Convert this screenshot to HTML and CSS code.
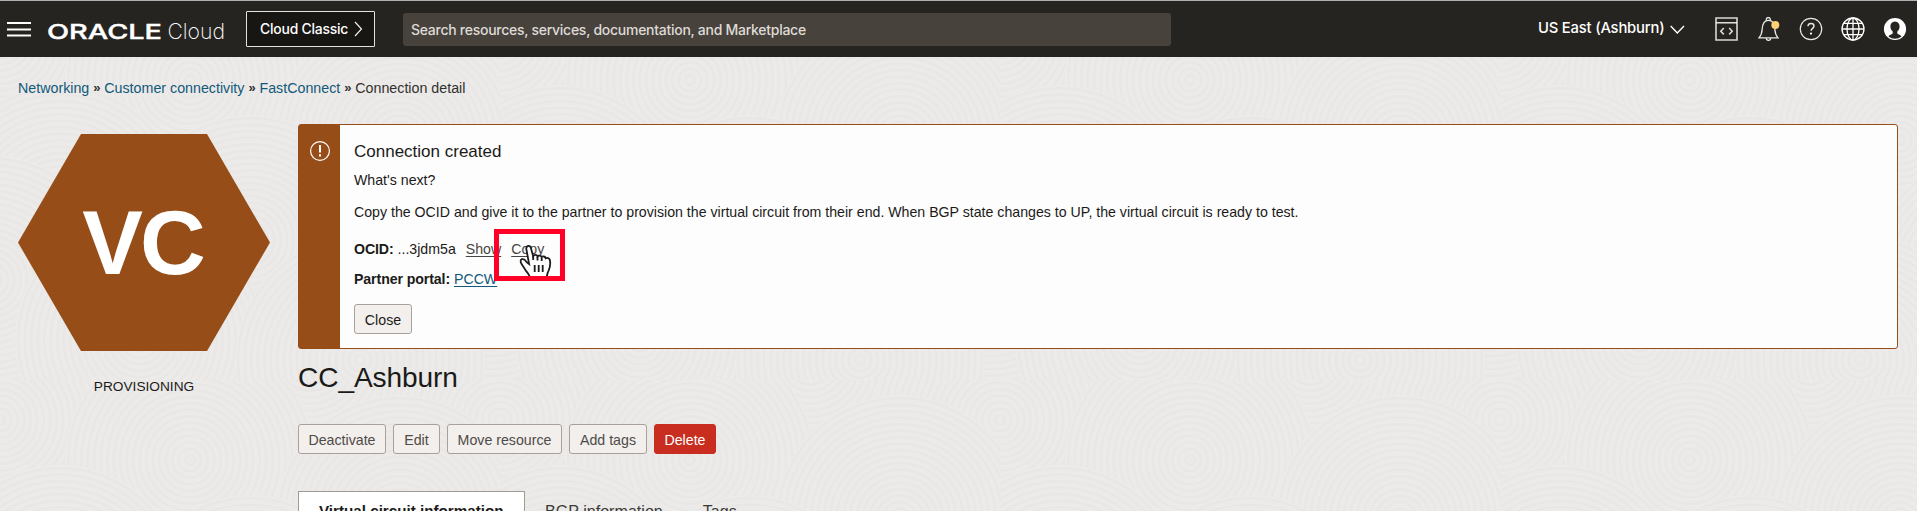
FILE: index.html
```html
<!DOCTYPE html>
<html lang="en">
<head>
<meta charset="utf-8">
<title>Connection detail</title>
<link rel="stylesheet" href="styles.css">
</head>
<body>
<header class="topbar">
  <svg class="menu" width="24" height="15" viewBox="0 0 24 15" fill="#fff"><path d="M0 0h24v2H0zM0 6.5h24v2H0zM0 12.5h24v2H0z"/></svg>
  <svg class="logo" width="188" height="36" viewBox="-1 -6 188 36" fill="#fff">
    <text class="logo-oracle" x="0" y="18" textLength="115" lengthAdjust="spacingAndGlyphs">ORACLE</text>
    <text class="logo-cloud" x="120.500" y="18" textLength="57.500" lengthAdjust="spacingAndGlyphs">Cloud</text>
  </svg>
  <a class="classic"><span>Cloud Classic</span><svg width="9" height="16" viewBox="0 0 9 16" fill="none" stroke="#eee" stroke-width="1.2"><path d="M1 1l6.5 7L1 15"/></svg></a>
  <div class="search">Search resources, services, documentation, and Marketplace</div>
  <div class="region"><span>US East (Ashburn)</span><svg width="15" height="10" viewBox="0 0 15 10" fill="none" stroke="#fff" stroke-width="1.4"><path d="M.7 1l6.6 7L14 1"/></svg></div>
  <div class="icons">
    <svg width="23" height="24" viewBox="0 0 23 24" fill="none" stroke="#d8d7d5" stroke-width="1.6"><path d="M1 1h21v22H1z"/><path d="M1 5.8h21" stroke="#fff" stroke-width="1.3"/><path d="M8.800 11l-3 3.200 3 3.200M14.200 11l3 3.200-3 3.200"/></svg>
    <svg class="bell" width="22" height="24" viewBox="0 0 22 24" fill="none" stroke="#e8e7e5" stroke-width="1.3"><path d="M8.400 3.100a2 2 0 1 1 3.800 0M1 20.900h19c-2-2.300-3-4.600-3.200-8.900-.3-5-2.200-8.700-6.300-8.700S4.500 7 4.200 12C4 16.300 3 18.600 1 20.900zM8.200 21c0 3.200 4.600 3.200 4.600 0"/><circle cx="17.300" cy="8" r="4" fill="#fbcf74" stroke="none"/></svg>
    <svg width="24" height="24" viewBox="0 0 24 24" fill="none" stroke="#e8e7e5" stroke-width="1.2"><circle cx="12" cy="12" r="10.700"/><path d="M9 9.300c0-1.900 1.300-2.900 3-2.900s3 1 3 2.700c0 2.200-2.900 2.300-2.900 4.700" stroke-width="1.500"/><circle cx="12" cy="16.600" r="1.100" fill="#fff" stroke="none"/></svg>
    <svg class="globe" width="24" height="24" viewBox="0 0 24 24" fill="none" stroke="#fff" stroke-width="1.300"><circle cx="12" cy="12" r="11"/><ellipse cx="12" cy="12" rx="6" ry="11"/><path d="M12 1v22M1 12h22M2.800 6.300h18.400M2.800 17.700h18.400"/></svg>
    <svg class="user" width="24" height="24" viewBox="0 0 24 24"><circle cx="12" cy="12" r="11.100" fill="#fff"/><path d="M12 4.400c3 0 4.600 2.200 4.600 5 0 2.200-1 4-2.300 5v1.700c0 1.500 3 1.500 4.200 3.300a10 10 0 0 1-13 0c1.200-1.800 4.200-1.800 4.200-3.300v-1.700c-1.300-1-2.300-2.800-2.300-5 0-2.800 1.600-5 4.600-5z" fill="#262420"/></svg>
  </div>
</header>
<nav class="crumbs">
  <a>Networking</a><b>»</b><a>Customer connectivity</a><b>»</b><a>FastConnect</a><b>»</b><span>Connection detail</span>
</nav>
<main class="page">
  <aside class="status">
    <div class="hexagon"><span>VC</span></div>
    <div class="state">PROVISIONING</div>
  </aside>
  <div class="content">
    <section class="alert">
      <div class="alert-bar"><svg width="20" height="22" viewBox="0 0 20 22" fill="none" stroke="#fff"><circle cx="10" cy="11" r="9.400" stroke-width="1.200"/><path d="M10 5v7.500M10 14.200v2.300" stroke-width="2"/></svg></div>
      <div class="alert-body">
        <h2>Connection created</h2>
        <p class="next">What's next?</p>
        <p class="copy">Copy the OCID and give it to the partner to provision the virtual circuit from their end. When BGP state changes to UP, the virtual circuit is ready to test.</p>
        <p class="ocid"><b>OCID:</b> <span class="value">...3jdm5a</span><a class="show">Show</a><a class="copylink">Copy<span class="marker"><svg class="hand" width="33" height="36" viewBox="0 0 33 36"><path d="M11 34c-.2-2.700-1.600-4.300-3.600-6.600L2.600 20c-1.300-2.100-1.400-4.300.3-4.800 2.100-.6 3.400.8 4.500 2.700l2.700 2.200L7.300 4.800c-.4-3.400 3.700-3.700 4.500-1.100l2.400 8.500c.5-1.700 3.900-1.800 4.300.3.800-1.400 3.700-1.200 4.100.6 1-1.200 3.700-.8 4.100 1.200 1.500-.8 3.700-.3 4.100 1.500.7 3 .4 7-1.100 10.500-1.300 2.600-2 4.400-2 7.700z" fill="#fff" stroke="#1c1c1c" stroke-width="1.800"/><path d="M14.200 12v4M18.500 13v3.500M22.700 14v3M15.700 21v7M19.700 21v7M23.700 21v7" fill="none" stroke="#1c1c1c" stroke-width="1.800"/></svg></span></a></p>
        <p class="portal"><b>Partner portal:</b> <a>PCCW</a></p>
        <button class="btn close">Close</button>
      </div>
    </section>
    <h1>CC_Ashburn</h1>
    <div class="actions">
      <button class="btn w1">Deactivate</button><button class="btn w2">Edit</button><button class="btn w3">Move resource</button><button class="btn w4">Add tags</button><button class="btn danger">Delete</button>
    </div>
    <div class="tabs"><a class="tab active">Virtual circuit information</a><a class="tab">BGP information</a><a class="tab">Tags</a></div>
  </div>
</main>
</body>
</html>
```

FILE: styles.css
```css
* { box-sizing: border-box; }
html { height: 511px; overflow: hidden; }
body {
  margin: 0;
  height: 511px;
  overflow: hidden;
  font: 14.160px/20px "Liberation Sans", Arial, sans-serif;
  color: #1b1a18;
  background-color: #ebeae8;
  background-image: url("data:image/svg+xml,%3Csvg xmlns='http://www.w3.org/2000/svg' width='500' height='380'%3E%3Cdefs%3E%3CradialGradient id='g' gradientUnits='userSpaceOnUse' cx='0' cy='0' r='6.500' spreadMethod='repeat'%3E%3Cstop offset='0' stop-color='%23ecebe9'/%3E%3Cstop offset='.5' stop-color='%23ebeae8'/%3E%3Cstop offset='.8' stop-color='%23e7e6e4'/%3E%3Cstop offset='1' stop-color='%23ecebe9'/%3E%3C/radialGradient%3E%3Ccircle id='c' r='125' fill='url(%23g)'/%3E%3C/defs%3E%3Cuse href='%23c' x='60' y='0'/%3E%3Cuse href='%23c' x='310' y='-20'/%3E%3Cuse href='%23c' x='500' y='40'/%3E%3Cuse href='%23c' x='0' y='40'/%3E%3Cuse href='%23c' x='190' y='80'/%3E%3Cuse href='%23c' x='400' y='140'/%3E%3Cuse href='%23c' x='60' y='210'/%3E%3Cuse href='%23c' x='250' y='240'/%3E%3Cuse href='%23c' x='490' y='280'/%3E%3Cuse href='%23c' x='-10' y='280'/%3E%3Cuse href='%23c' x='140' y='340'/%3E%3Cuse href='%23c' x='360' y='360'/%3E%3C/svg%3E");
}
.topbar {
  display: flex;
  align-items: flex-start;
  height: 57px;
  border-top: 1px solid #aeb0b1;
  background: #262420;
  color: #fff;
  font-family: Inter, "Open Sans", sans-serif;
}
.topbar svg { display: block; flex: none; }
.menu { margin: 21px 0 0 7px; }
.logo { margin: 14px 0 0 15px; }
.logo-oracle { font: 500 20.500px Inter, sans-serif; stroke: #fff; stroke-width: .4px; }
.logo-cloud { font: 200 22px Inter, sans-serif; }
.classic {
  display: flex;
  align-items: center;
  gap: 6px;
  width: 129px;
  height: 36px;
  margin: 10px 0 0 12px;
  padding-left: 13px;
  border: 1px solid #e4e3e1;
  border-radius: 1px;
  background: #171613;
  color: #fff;
  font-size: 13.900px;
  font-weight: 500;
  letter-spacing: -.2px;
  white-space: nowrap;
}
.search {
  width: 768px;
  height: 33px;
  margin: 12px 0 0 28px;
  padding-left: 8px;
  border-radius: 3px;
  background: #48423c;
  color: #dedbd7;
  font-size: 14px;
  font-weight: 500;
  line-height: 34px;
  letter-spacing: -.27px;
}
.region {
  display: flex;
  align-items: center;
  gap: 6px;
  margin: 17px 0 0 367px;
  width: 147px;
  font-weight: 500;
  font-size: 14.800px;
  letter-spacing: -.2px;
  white-space: nowrap;
}
.region svg { margin-top: 4px; }
.icons { display: flex; gap: 19px; margin: 16px 0 0 30px; }
.icons .bell { margin-left: 1px; }
.icons .globe { margin-left: -1px; }
.icons .user { margin-left: -1px; }
.crumbs { display: flex; margin: 21px 0 0 18px; font-size: 14.250px; line-height: 20px; white-space: nowrap; color: #33312e; }
.crumbs b { width: 15px; padding-left: 4px; font-size: 13px; }
a { color: #12597a; }
.page { display: flex; margin-top: 26px; }
.status { width: 252px; margin: 10px 28px 0 18px; text-align: center; }
.hexagon {
  height: 217px;
  padding: 56px 3px 0 0;
  background: #964d18;
  clip-path: polygon(0 50%, 25% 0, 75% 0, 100% 50%, 75% 100%, 25% 100%);
  color: #fff;
  font: bold 91px/105px "Liberation Sans", Arial, sans-serif;
  letter-spacing: -3px;
}
.state { margin-top: 26px; font-size: 13.700px; }
.content { width: 1600px; }
.alert { display: flex; height: 225px; border: 1px solid #964d18; border-radius: 3px; background: #fdfdfd; }
.alert-bar { width: 41px; padding: 15px 0 0 11px; background: #964d18; }
.alert-body { flex: 1; padding: 16px 0 0 14px; }
.alert-body p { margin: 0; line-height: 20px; white-space: nowrap; }
h2 { margin: 0; font-size: 17px; font-weight: 400; line-height: 22px; }
.alert-body .next { margin-top: 7px; }
.alert-body .copy { margin-top: 12px; }
.alert-body .ocid { margin-top: 17px; }
.alert-body .portal { margin-top: 10px; }
.alert-body b { letter-spacing: -.1px; }
.portal a { text-decoration: underline; text-underline-offset: 2px; }
.ocid a { color: #474542; text-decoration: underline; text-underline-offset: 2px; }
.show { margin-left: 10px; }
.copylink { position: relative; margin-left: 10px; }
.marker {
  position: absolute;
  left: -17px;
  top: -12px;
  width: 71px;
  height: 52px;
  border: 5px solid #ff0027;
  overflow: hidden;
}
.hand { position: absolute; left: 20px; top: 10px; }
.btn {
  height: 30px;
  padding: 2px 0 0;
  border: 1px solid #aaa09b;
  border-radius: 3px;
  background: #f2efec;
  color: #4f4b48;
  font: 14.200px "Liberation Sans", Arial, sans-serif;
  white-space: nowrap;
}
.close { display: block; width: 58px; margin-top: 15px; color: #1b1a18; }
h1 { margin: 11px 0 0; font-size: 28.100px; font-weight: 400; line-height: 36px; letter-spacing: -.1px; }
.actions { display: flex; gap: 7px; margin-top: 28px; }
.w1 { width: 88px; }
.w2 { width: 47px; }
.w3 { width: 115px; }
.w4 { width: 78px; }
.danger { width: 62px; border-color: #c92d20; background: #c92d20; color: #fff; }
.tabs { display: flex; margin-top: 37px; font-size: 16.100px; white-space: nowrap; }
.tab { height: 45px; padding-top: 10px; margin-right: 40px; color: #3c3a37; }
.tab.active { width: 227px; margin-right: 20px; padding: 9px 0 0 20px; border: 1px solid #a09b93; background: #fff; color: #1b1a18; font-size: 15.200px; font-weight: bold; }
```
